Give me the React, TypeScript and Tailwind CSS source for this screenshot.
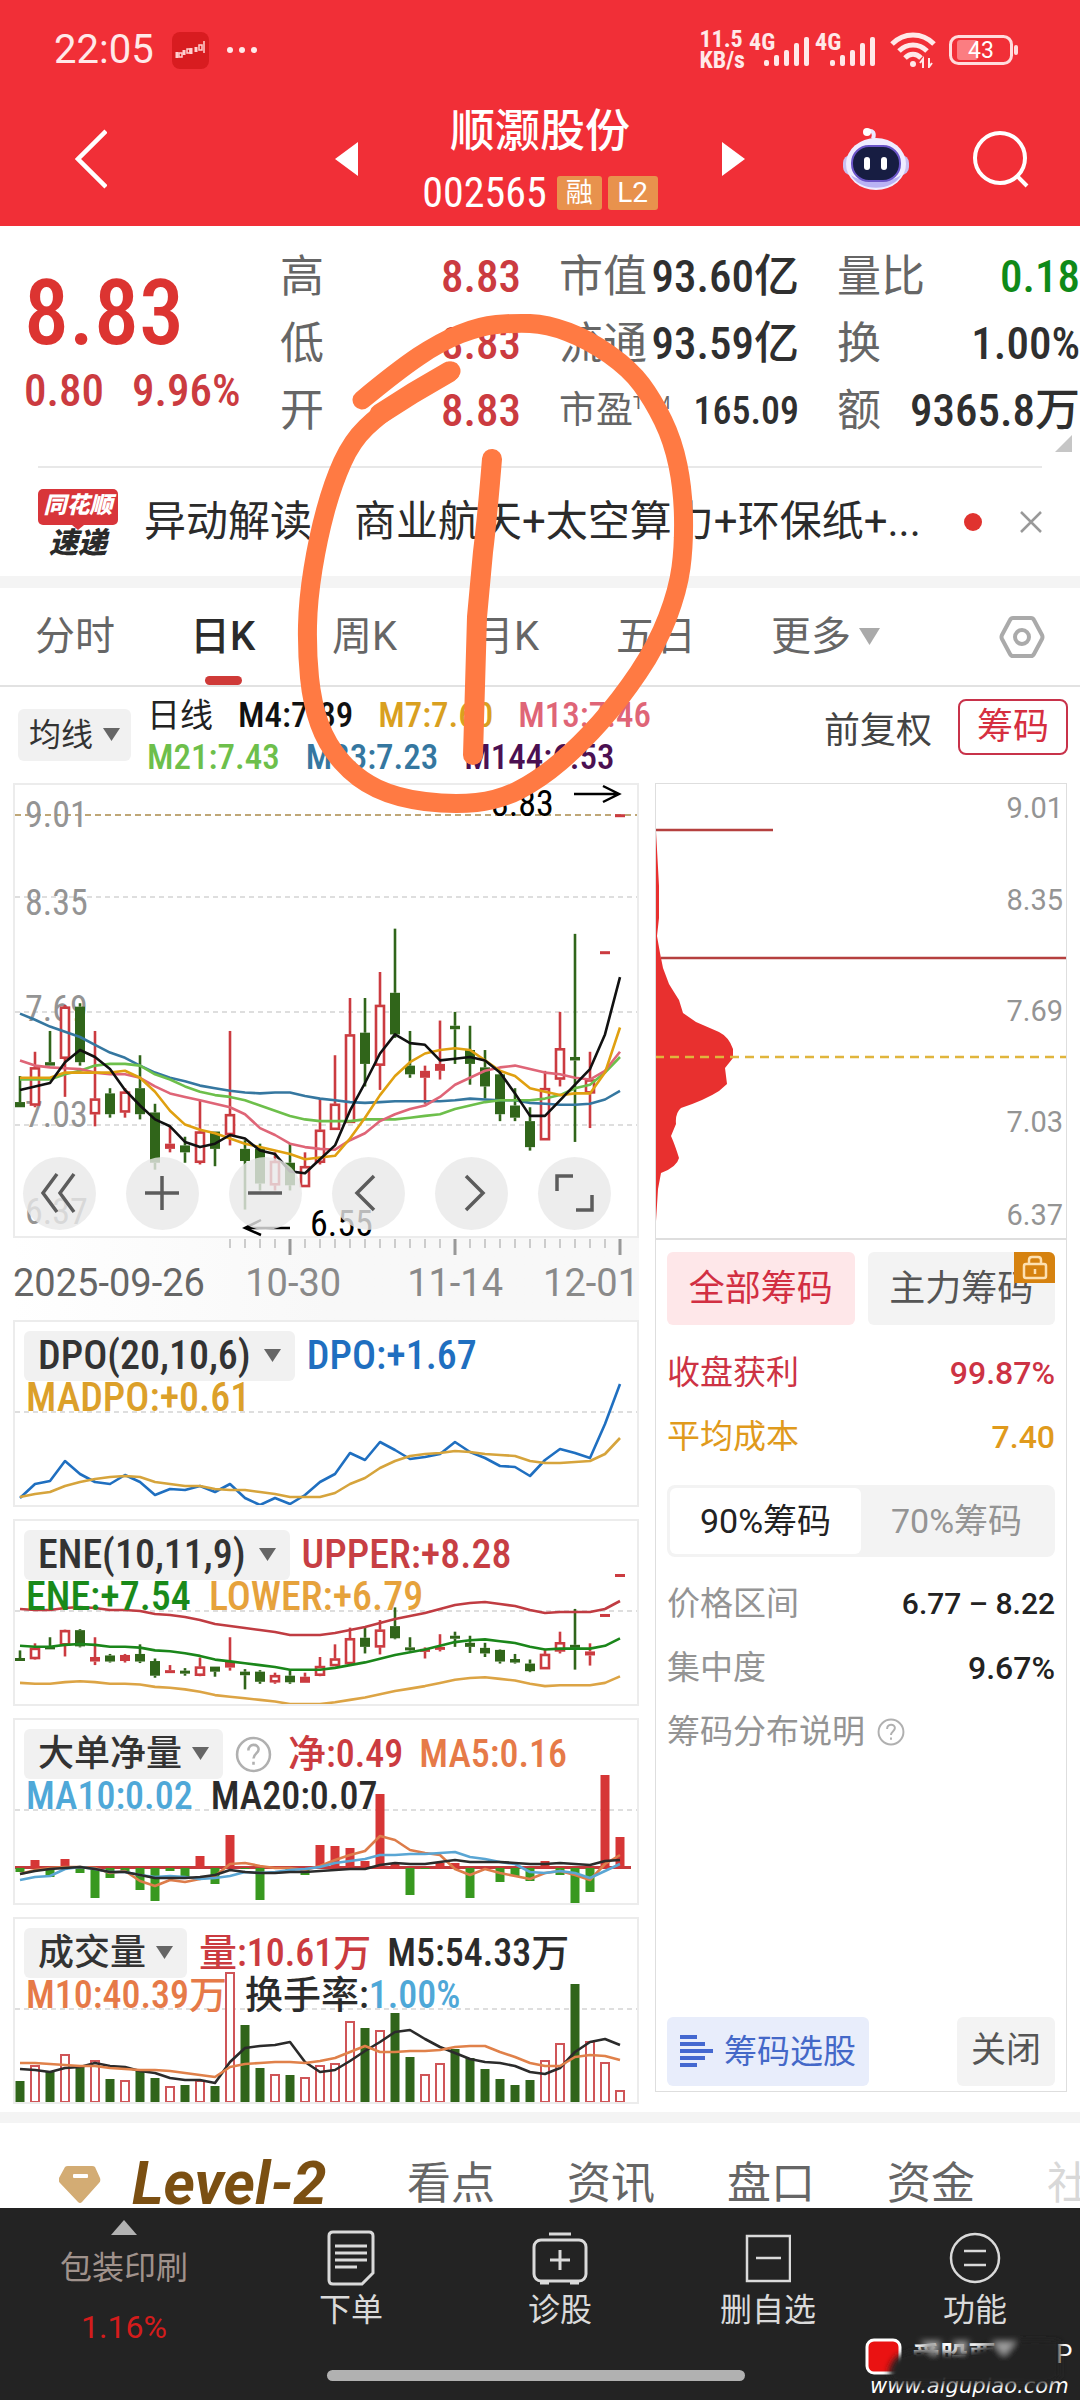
import React from "react";

const NUM = "font-['Roboto_Condensed','Noto_Sans_CJK_SC',sans-serif] font-medium";

const RED = "#cb3b40";
const GREEN = "#30651a";

// [high, body top, body bottom, low, up day]
const CANDLES: [number, number, number, number, boolean][] = [
  [7.32, 7.17, 7.14, 7.14, false],
  [7.46, 7.37, 7.15, 7.14, true],
  [7.58, 7.4, 7.38, 7.38, false],
  [7.73, 7.72, 7.42, 7.2, true],
  [7.74, 7.72, 7.4, 7.38, false],
  [7.58, 7.19, 7.1, 7.03, true],
  [7.25, 7.22, 7.1, 7.08, false],
  [7.25, 7.23, 7.11, 7.08, true],
  [7.44, 7.25, 7.1, 7.07, false],
  [7.16, 7.11, 6.82, 6.78, false],
  [7.03, 6.93, 6.9, 6.88, true],
  [6.97, 6.92, 6.88, 6.82, false],
  [7.18, 7.0, 6.82, 6.81, true],
  [7.0, 7.0, 6.9, 6.8, false],
  [7.58, 7.1, 6.98, 6.92, true],
  [6.95, 6.9, 6.83, 6.55, false],
  [6.93, 6.9, 6.7, 6.66, false],
  [6.88, 6.83, 6.69, 6.66, true],
  [6.93, 6.82, 6.69, 6.66, false],
  [6.88, 6.8, 6.68, 6.68, true],
  [7.19, 7.01, 6.82, 6.81, true],
  [7.44, 7.16, 7.01, 7.01, true],
  [7.77, 7.56, 7.05, 7.05, true],
  [7.77, 7.57, 7.39, 7.26, false],
  [7.92, 7.73, 7.38, 7.24, true],
  [8.17, 7.8, 7.56, 7.54, false],
  [7.58, 7.38, 7.33, 7.31, false],
  [7.38, 7.35, 7.31, 7.16, true],
  [7.64, 7.39, 7.35, 7.3, true],
  [7.69, 7.61, 7.59, 7.39, false],
  [7.61, 7.47, 7.39, 7.27, false],
  [7.47, 7.37, 7.26, 7.19, false],
  [7.34, 7.33, 7.1, 7.06, false],
  [7.25, 7.15, 7.08, 7.06, false],
  [7.14, 7.06, 6.91, 6.89, false],
  [7.35, 7.25, 6.95, 6.95, true],
  [7.69, 7.48, 7.3, 7.26, true],
  [8.14, 7.43, 7.41, 6.94, false],
  [7.46, 7.3, 7.22, 7.02, true],
  [8.04, 8.04, 8.04, 8.04, true],
  [8.83, 8.83, 8.83, 8.83, true],
];

const M4 = [7.24, 7.26, 7.28, 7.4, 7.47, 7.43, 7.36, 7.24, 7.15, 7.07, 7.03, 6.94, 6.91, 6.93, 6.98, 6.96, 6.89, 6.87, 6.77, 6.76, 6.84, 6.92, 7.12, 7.28, 7.45, 7.56, 7.51, 7.5, 7.41, 7.42, 7.43, 7.41, 7.34, 7.22, 7.09, 7.09, 7.18, 7.27, 7.36, 7.56, 7.89];
const M7 = [7.31, 7.31, 7.31, 7.34, 7.34, 7.34, 7.34, 7.35, 7.31, 7.23, 7.12, 7.04, 7.01, 6.99, 6.96, 6.93, 6.91, 6.89, 6.87, 6.84, 6.85, 6.86, 6.96, 7.08, 7.21, 7.32, 7.4, 7.45, 7.47, 7.48, 7.47, 7.41, 7.35, 7.32, 7.25, 7.23, 7.21, 7.22, 7.22, 7.34, 7.6];
const M13 = [7.41, 7.38, 7.37, 7.365, 7.36, 7.34, 7.33, 7.33, 7.31, 7.26, 7.22, 7.2, 7.18, 7.16, 7.14, 7.1, 7.02, 6.98, 6.93, 6.91, 6.9, 6.895, 6.95, 6.99, 7.06, 7.1, 7.13, 7.15, 7.2, 7.27, 7.31, 7.35, 7.37, 7.38, 7.36, 7.34, 7.33, 7.31, 7.3, 7.35, 7.46];
const M21 = [7.3, 7.3, 7.3, 7.33, 7.35, 7.38, 7.39, 7.39, 7.38, 7.33, 7.3, 7.26, 7.23, 7.21, 7.2, 7.18, 7.15, 7.12, 7.09, 7.07, 7.06, 7.06, 7.06, 7.07, 7.07, 7.07, 7.08, 7.09, 7.1, 7.13, 7.15, 7.17, 7.18, 7.18, 7.18, 7.19, 7.21, 7.25, 7.27, 7.34, 7.43];
const M33 = [7.68, 7.645, 7.605, 7.575, 7.545, 7.5, 7.455, 7.425, 7.38, 7.34, 7.31, 7.29, 7.265, 7.25, 7.235, 7.225, 7.22, 7.225, 7.225, 7.205, 7.19, 7.18, 7.17, 7.165, 7.17, 7.175, 7.175, 7.175, 7.175, 7.18, 7.19, 7.185, 7.18, 7.18, 7.165, 7.16, 7.155, 7.155, 7.16, 7.185, 7.235];

const DPO = [178, 164, 161, 141, 154, 162, 164, 155, 162, 175, 169, 170, 166, 172, 164, 178, 185, 178, 184, 175, 162, 154, 133, 140, 122, 130, 139, 137, 134, 122, 132, 138, 146, 147, 156, 140, 129, 133, 138, 104, 64];
const MADPO = [177, 174, 172, 166, 162, 159, 157, 156, 157, 162, 164, 166, 166, 169, 170, 170, 172, 174, 177, 177, 177, 173, 164, 158, 148, 141, 136, 134, 133, 131, 132, 134, 135, 136, 141, 143, 143, 142, 141, 134, 118];

const UPPER = [90, 91, 91, 89, 88, 89, 91, 91, 92, 95, 96, 98, 101, 105, 107, 109, 111, 113, 116, 116, 116, 114, 111, 108, 104, 100, 97, 94, 90, 86, 84, 83, 85, 87, 91, 94, 93, 93, 93, 90, 82];
const ENE = UPPER.map((v) => v * 0.92 + 44);
const LOWER = UPPER.map((v) => v * 0.81 + 91);

const NET_BARS = [154, 142, 159, 141, 155, 180, 160, 155, 172, 183, 153, 159, 138, 166, 117, 151, 182, 150, 155, 157, 127, 128, 130, 143, 76, 145, 177, 151, 145, 145, 180, 150, 164, 158, 163, 143, 157, 185, 174, 57, 119];
const NET5 = [156, 152, 150, 149, 149, 150, 155, 153, 163, 168, 162, 164, 161, 158, 146, 145, 148, 150, 150, 152, 148, 142, 137, 133, 118, 122, 132, 135, 137, 151, 157, 151, 155, 158, 161, 155, 153, 157, 162, 146, 137];
const NET10 = [162, 159, 158, 151, 149, 151, 154, 154, 157, 159, 158, 159, 161, 160, 158, 154, 155, 154, 152, 151, 149, 145, 143, 141, 137, 137, 136, 136, 135, 134, 139, 141, 144, 146, 154, 155, 153, 155, 160, 153, 146];
const NET20 = [156, 153, 151, 150, 149, 151, 154, 154, 157, 160, 160, 160, 159, 157, 152, 154, 155, 155, 154, 154, 153, 152, 151, 151, 147, 145, 146, 146, 144, 142, 144, 144, 144, 145, 146, 146, 145, 146, 147, 143, 142];

const VOL_BARS = [164, 149, 155, 138, 149, 144, 162, 164, 154, 161, 170, 168, 164, 169, 56, 108, 151, 158, 158, 161, 149, 147, 105, 111, 114, 96, 140, 158, 147, 132, 141, 152, 162, 168, 163, 144, 127, 67, 125, 146, 174];
const VOL5 = [152, 153, 155, 151, 150, 146, 149, 150, 154, 156, 161, 163, 163, 166, 145, 131, 129, 128, 125, 145, 155, 153, 144, 134, 125, 115, 113, 122, 130, 136, 142, 145, 146, 149, 155, 157, 151, 135, 125, 122, 128];
const VOL10 = [146, 146, 147, 148, 149, 149, 151, 152, 153, 153, 154, 156, 158, 160, 150, 147, 146, 145, 145, 146, 144, 141, 135, 129, 135, 135, 134, 134, 133, 130, 129, 129, 135, 140, 146, 149, 149, 140, 138, 139, 143];

const xAt = (i: number) => 7 + i * 15;
const priceY = (p: number) => (9.01 - p) * 173.4;
const eneY = (p: number) => 55 + (8.83 - p) * 50.6;
const same = (v: number) => v;

type LineProps = { data: number[]; color: string; scale?: (v: number) => number };

const Line = ({ data, color, scale = same }: LineProps) => (
  <polyline
    points={data.map((v, i) => `${xAt(i)},${scale(v).toFixed(1)}`).join(" ")}
    fill="none"
    stroke={color}
    strokeWidth="2.6"
    strokeLinejoin="round"
  />
);

const Candles = ({ scale }: { scale: (v: number) => number }) => (
  <>
    {CANDLES.map(([high, top, bottom, low, up], i) => {
      const color = up ? RED : GREEN;
      const x = xAt(i);
      const y1 = scale(top);
      const h = Math.max(scale(bottom) - y1, 3);
      const hollow = up && h > 7;
      return (
        <g key={i} stroke={color} strokeWidth="2.6">
          <line x1={x} x2={x} y1={scale(high)} y2={y1} />
          <line x1={x} x2={x} y1={y1 + h} y2={Math.max(scale(low), y1 + h)} />
          {hollow ? (
            <rect x={x - 4} y={y1 + 1} width="8" height={h - 2} fill="#fff" />
          ) : (
            <rect x={x - 5} y={y1} width="10" height={h} fill={color} stroke="none" />
          )}
        </g>
      );
    })}
  </>
);

const MidLine = ({ y }: { y: number }) => (
  <line x1="2" x2="624" y1={y} y2={y} stroke="#d4d4d4" strokeWidth="1.5" strokeDasharray="5 4" />
);

const Caret = ({ className = "" }: { className?: string }) => (
  <svg viewBox="0 0 17 14" className={`w-[17px] h-[14px] ${className}`}>
    <path d="M0 0h17L8.500 13z" fill="#666" />
  </svg>
);

const Help = ({ size }: { size: number }) => (
  <svg viewBox="0 0 36 36" width={size} height={size} fill="none" stroke="#b0b0b0" strokeWidth="2.5">
    <circle cx="18" cy="18" r="16" />
    <path d="M13 14c0-7 10-7 10-1 0 4-5 4-5 9M18 25v3" />
  </svg>
);

const Signal = () => (
  <svg viewBox="0 0 62 34" className="w-[62px] h-[34px] overflow-visible" fill="#ffe9e9">
    <text x="0" y="17" fontSize="24" fontWeight="700" fontFamily="Roboto Condensed">
      4G
    </text>
    <rect x="15" y="27" width="5" height="6" rx="2" />
    <rect x="25" y="22" width="5" height="11" rx="2" />
    <rect x="35" y="17" width="5" height="16" rx="2" />
    <rect x="45" y="10" width="5" height="23" rx="2" />
    <rect x="55" y="4" width="5" height="29" rx="2" />
  </svg>
);

const StatusBar = () => (
  <div className="flex items-center h-[100px] pl-[54px] pr-[61px] text-[#ffe9e9]">
    <span className="text-[40px] leading-none">22:05</span>
    <svg viewBox="0 0 37 37" className="ml-[18px] w-[37px] h-[37px]">
      <rect width="37" height="37" rx="8" fill="#d81c20" />
      <path
        d="M5 20v6M12 18v5M19 16v6M24 15v5"
        stroke="#ffd0d0"
        strokeWidth="3"
      />
      <path d="M7 21h3v4H7zM15 17h3v4h-3zM27 13h3v5h-3zM32 9v12" stroke="#ffd0d0" strokeWidth="1.500" fill="none" />
    </svg>
    <svg viewBox="0 0 32 8" className="ml-[17px] w-[32px] h-2" fill="#ffe9e9">
      <circle cx="4" cy="4" r="3" />
      <circle cx="16" cy="4" r="3" />
      <circle cx="28" cy="4" r="3" />
    </svg>
    <div className="ml-auto flex flex-col text-[24px] leading-[21px] font-bold font-['Roboto_Condensed',sans-serif]">
      <span>11.5</span>
      <span>KB/s</span>
    </div>
    <div className="ml-1 flex gap-1">
      <Signal />
      <Signal />
    </div>
    <svg viewBox="0 0 48 36" className="ml-3 w-[48px] h-[36px]" fill="none" stroke="#ffe9e9" strokeWidth="5">
      <path d="M3 12c12-12 30-12 42 0M10 19c8-8 20-8 28 0M16 26c5-5 11-5 16 0" />
      <circle cx="24" cy="32" r="3" fill="#ffe9e9" stroke="none" />
      <path d="M34 36v-9l-3 4M40 26v9l3-4" strokeWidth="2" />
    </svg>
    <svg viewBox="0 0 70 30" className="ml-3 w-[70px] h-[30px]">
      <rect x="8" y="5" width="21" height="20" rx="3" fill="#fb7d81" />
      <rect x="1.500" y="1.500" width="61" height="27" rx="8" fill="none" stroke="#ffdcdc" strokeWidth="3" />
      <rect x="65" y="10" width="4" height="10" rx="2" fill="#ffdcdc" />
      <text x="32" y="23" textAnchor="middle" fontSize="23" fill="#fff" fontFamily="Roboto">
        43
      </text>
    </svg>
  </div>
);

const TitleBar = () => (
  <div className="flex items-center h-[126px] pl-[75px] pr-[50px] text-white">
    <button aria-label="返回" className="mb-2">
      <svg viewBox="0 0 32 60" className="w-[32px] h-[60px]" fill="none" stroke="#fff" strokeWidth="4.500">
        <path d="M31 2 3 30l28 28" />
      </svg>
    </button>
    <button aria-label="上一只" className="ml-[228px] mb-2">
      <svg viewBox="0 0 23 34" className="w-[23px] h-[34px]">
        <path d="M23 0v34L0 17z" fill="#fff" />
      </svg>
    </button>
    <div className="flex-1 flex flex-col items-center">
      <h1 className="text-[45px] font-medium leading-[60px]">顺灏股份</h1>
      <div className="flex items-center gap-[6px] h-[62px]">
        <span className="text-[42px] leading-none mr-1 font-['Roboto_Condensed',sans-serif]">002565</span>
        <span className="w-[45px] h-[34px] rounded-[3px] bg-[#e8924d] text-[27px] leading-[34px] text-center">
          融
        </span>
        <span className="w-[50px] h-[34px] rounded-[3px] bg-[#e8924d] text-[28px] leading-[34px] text-center">
          L2
        </span>
      </div>
    </div>
    <button aria-label="下一只" className="mb-2">
      <svg viewBox="0 0 23 34" className="w-[23px] h-[34px]">
        <path d="M0 0v34l23-17z" fill="#fff" />
      </svg>
    </button>
    <button aria-label="智能助手" className="ml-[98px] mb-2">
      <svg viewBox="0 0 66 64" className="w-[66px] h-[64px]">
        <path d="M30 12c2-6 0-9-5-8" fill="none" stroke="#ece8ff" strokeWidth="4" />
        <circle cx="24" cy="5" r="4" fill="#fff" />
        <rect x="0" y="28" width="66" height="20" rx="8" fill="#c9bff0" />
        <ellipse cx="33" cy="37" rx="30" ry="26" fill="#efecff" />
        <path d="M8 48c8 17 42 17 50 0-10 8-40 8-50 0z" fill="#b9b2f4" />
        <rect x="9" y="19" width="48" height="35" rx="17" fill="#171d42" stroke="#6b55c8" strokeWidth="2" />
        <rect x="21" y="30" width="6" height="13" rx="3" fill="#fff" />
        <rect x="38" y="30" width="6" height="13" rx="3" fill="#fff" />
      </svg>
    </button>
    <button aria-label="搜索" className="ml-[63px] mb-2">
      <svg viewBox="0 0 58 58" className="w-[58px] h-[58px]" fill="none" stroke="#fff" strokeWidth="4">
        <circle cx="28" cy="28" r="25" />
        <path d="m45 46 10 10" />
      </svg>
    </button>
  </div>
);

type QuoteRow = { label: string; sub?: string; value: string; color: string; small?: boolean };

const QUOTES: QuoteRow[][] = [
  [
    { label: "高", value: "8.83", color: "text-[#cb3b40]" },
    { label: "低", value: "8.83", color: "text-[#cb3b40]" },
    { label: "开", value: "8.83", color: "text-[#cb3b40]" },
  ],
  [
    { label: "市值", value: "93.60亿", color: "text-[#2f2f2f]" },
    { label: "流通", value: "93.59亿", color: "text-[#2f2f2f]" },
    { label: "市盈", sub: "TTM", value: "165.09", color: "text-[#2f2f2f]", small: true },
  ],
  [
    { label: "量比", value: "0.18", color: "text-[#0f8a18]" },
    { label: "换", value: "1.00%", color: "text-[#2f2f2f]" },
    { label: "额", value: "9365.8万", color: "text-[#2f2f2f]" },
  ],
];

const Quote = () => (
  <section className="relative grid grid-cols-[218fr_241fr_240fr_243fr] gap-x-[38px] pl-6 pt-[17px] h-[240px]">
    <div className={`text-[#dc3431] ${NUM}`}>
      <div className="mt-[26px] text-[90px] leading-[90px]">8.83</div>
      <div className="flex gap-[28px] text-[45px] leading-[64px] text-[#cb3b40] whitespace-nowrap">
        <span>0.80</span>
        <span>9.96%</span>
      </div>
    </div>
    {QUOTES.map((rows, i) => (
      <dl key={i}>
        {rows.map((row) => (
          <div key={row.label} className="flex items-center justify-between h-[67px] whitespace-nowrap">
            <dt className={`text-[#666] leading-none ${row.small ? "text-[37px]" : "text-[44px]"}`}>
              {row.label}
              {row.sub && <sup className="text-[18px] top-[-14px]">{row.sub}</sup>}
            </dt>
            <dd className={`leading-none ${NUM} ${row.color} ${row.small ? "text-[38px]" : "text-[45px]"}`}>
              {row.value}
            </dd>
          </div>
        ))}
      </dl>
    ))}
    <svg viewBox="0 0 17 17" className="absolute right-2 bottom-[14px] w-[17px] h-[17px]">
      <path d="M17 0v17H0z" fill="#c6c6c6" />
    </svg>
  </section>
);

const Banner = () => (
  <section className="mx-[38px] flex items-center h-[110px] border-t-2 border-[#e8e8e8]">
    <div className="w-[80px] flex flex-col items-center font-black italic">
      <span className="w-[80px] h-[36px] rounded-[5px] bg-[#d8353a] text-white text-[23px] leading-[34px] text-center">
        同花顺
      </span>
      <svg viewBox="0 0 12 5" className="w-3 h-[5px]">
        <path d="M0 0h12L6 5z" fill="#d8353a" />
      </svg>
      <span className="text-[29px] leading-[26px] text-[#2a2a2a]">速递</span>
    </div>
    <a href="#news" className="ml-[26px] flex-1 flex gap-[42px] text-[42px] text-[#2b2b2b] whitespace-nowrap leading-[60px]">
      <span>异动解读</span>
      <span>商业航天+太空算力+环保纸+...</span>
    </a>
    <span className="w-[18px] h-[18px] rounded-full bg-[#e0332f]" />
    <button aria-label="关闭提示" className="ml-[38px]">
      <svg viewBox="0 0 22 22" className="w-[22px] h-[22px]" stroke="#999" strokeWidth="2.500">
        <path d="m1 1 20 20M21 1 1 21" />
      </svg>
    </button>
  </section>
);

const PERIODS = ["分时", "日K", "周K", "月K", "五日"];

const PeriodTabs = () => (
  <nav className="flex items-center h-[99px] pl-[35px] pr-[35px] border-b-2 border-[#e2e2e2] text-[40px] text-[#666]">
    {PERIODS.map((name) => (
      <button
        key={name}
        className={`relative h-full mr-[71px] text-left whitespace-nowrap ${
          name.endsWith("K") ? "w-[71px]" : "w-[84px]"
        } ${name === "日K" ? "font-medium text-[#2b2b2b]" : ""}`}
      >
        {name}
        {name === "日K" && (
          <span className="absolute left-[15px] bottom-0 w-[37px] h-[9px] rounded-full bg-[#cf3a38]" />
        )}
      </button>
    ))}
    <button className="flex items-center gap-2 whitespace-nowrap">
      更多
      <svg viewBox="0 0 21 18" className="w-[21px] h-[18px]">
        <path d="M0 0h21L10.500 17z" fill="#aaa" />
      </svg>
    </button>
    <button aria-label="设置" className="ml-auto">
      <svg viewBox="0 0 46 44" className="w-[46px] h-[44px]" fill="none" stroke="#aaa" strokeWidth="4">
        <path d="M14 3h18q2 0 3 2l8 15q1 2 0 4l-8 15q-1 2-3 2H14q-2 0-3-2L3 24q-1-2 0-4l8-15q1-2 3-2z" />
        <circle cx="23" cy="22" r="7" />
      </svg>
    </button>
  </nav>
);

const AverageLegend = () => (
  <div className="flex items-center h-[96px] pl-[18px] pr-[12px]">
    <button className="flex items-center gap-[10px] w-[113px] h-[52px] pl-[11px] rounded-md bg-[#f1f1f1] text-[32px] text-[#333] whitespace-nowrap">
      均线
      <Caret />
    </button>
    <div className={`ml-[16px] mt-1 text-[35px] leading-[42px] whitespace-nowrap ${NUM}`}>
      <div className="flex gap-[25px]">
        <span className="text-[33px] font-normal text-[#222]">日线</span>
        <span className="text-[#111]">M4:7.89</span>
        <span className="text-[#d9a01f]">M7:7.60</span>
        <span className="text-[#df6577]">M13:7.46</span>
      </div>
      <div className="flex gap-[26px]">
        <span className="text-[#6dbf4b]">M21:7.43</span>
        <span className="text-[#3577a0]">M33:7.23</span>
        <span className="text-[#4b1052]">M144:6.53</span>
      </div>
    </div>
    <button className="ml-auto mb-2 text-[36px] text-[#444] whitespace-nowrap">前复权</button>
    <button className="ml-[26px] mb-4 w-[110px] h-[56px] rounded-lg border-2 border-[#c8324a] text-[36px] leading-[50px] text-[#d62f40] whitespace-nowrap">
      筹码
    </button>
  </div>
);

const CHART_ACTIONS = [
  { label: "最前", d: "M34 17 20 36l14 19M51 17 37 36l14 19" },
  { label: "放大", d: "M36 19v34M19 36h34" },
  { label: "缩小", d: "M19 36h34" },
  { label: "左移", d: "M42 19 25 36l17 17" },
  { label: "右移", d: "M31 19l17 17-17 17" },
  { label: "全屏", d: "M19 34V19h16M54 38v15H38" },
];

const PRICE_LABELS: [string, number][] = [
  ["9.01", 44],
  ["8.35", 132],
  ["7.69", 238],
  ["7.03", 344],
  ["6.37", 441],
];

const PriceChart = () => (
  <div className="relative border-2 border-[#ececec]">
    <svg viewBox="2 2 622 451" className="block w-full h-auto overflow-visible">
      {[114, 229, 342].map((y) => (
        <MidLine key={y} y={y} />
      ))}
      <line x1="2" x2="624" y1="32" y2="32" stroke="#bfa777" strokeWidth="2" strokeDasharray="6 4" />
      <g fontFamily="Roboto Condensed" fontSize="36" fill="#949494">
        {PRICE_LABELS.map(([text, y]) => (
          <text key={text} x="12" y={y}>
            {text}
          </text>
        ))}
      </g>
      <Candles scale={priceY} />
      <Line data={M33} color="#3577a0" scale={priceY} />
      <Line data={M21} color="#6dbf4b" scale={priceY} />
      <Line data={M13} color="#df6577" scale={priceY} />
      <Line data={M7} color="#e0a010" scale={priceY} />
      <Line data={M4} color="#111" scale={priceY} />
      <g fontFamily="Roboto Condensed" fontSize="36" fill="#000">
        <text x="478" y="33">
          8.83
        </text>
        <text x="297" y="453">
          6.55
        </text>
      </g>
      <path
        d="M561 11h45M590 3l16 8-16 8M277 445h-45M248 437l-16 8 16 7"
        fill="none"
        stroke="#000"
        strokeWidth="2.500"
      />
    </svg>
    <div className="absolute inset-x-0 bottom-[6px] flex justify-between pl-2 pr-[26px]">
      {CHART_ACTIONS.map((action) => (
        <button key={action.label} aria-label={action.label} className="w-[73px] h-[73px] rounded-full bg-[#e8e8e8]/80">
          <svg viewBox="0 0 73 73" className="w-full h-full" fill="none" stroke="#5c5c5c" strokeWidth="3.500">
            <path d={action.d} />
          </svg>
        </button>
      ))}
    </div>
  </div>
);

const DateAxis = () => (
  <div className="h-[82px] bg-gradient-to-r from-white via-[#f8f8f8] to-[#f8f8f8]">
    <svg viewBox="0 0 626 18" className="block w-full h-auto">
      {Array.from({ length: 27 }, (_, i) => 14 + i).map((i) => {
        const major = i === 18 || i === 29 || i === 40;
        return (
          <line
            key={i}
            x1={xAt(i)}
            x2={xAt(i)}
            y1="1"
            y2={major ? 17 : 10}
            stroke={major ? "#999" : "#ccc"}
            strokeWidth={major ? 3 : 2}
          />
        );
      })}
    </svg>
    <div className="flex text-[38px] leading-[54px] text-[#8a8a8a] whitespace-nowrap">
      <span className="text-[#666]">2025-09-26</span>
      <span className="ml-auto">10-30</span>
      <span className="ml-[66px]">11-14</span>
      <span className="ml-[40px]">12-01</span>
    </div>
  </div>
);

type IndicatorProps = {
  name: string;
  cjk?: boolean;
  help?: boolean;
  first: React.ReactNode;
  second: React.ReactNode;
  children: React.ReactNode;
};

const Indicator = ({ name, cjk, help, first, second, children }: IndicatorProps) => (
  <section className="relative border-2 border-[#ececec]">
    <svg viewBox="2 2 622 183" className="block w-full h-auto">
      <MidLine y={92} />
      {children}
    </svg>
    <div className={`absolute left-[9px] top-[9px] leading-[40px] whitespace-nowrap ${NUM} ${cjk ? "text-[38px]" : "text-[40px]"}`}>
      <div className="flex items-center gap-[12px] h-[50px]">
        <button
          className={`flex items-center h-[50px] px-[14px] rounded-md bg-[#f1f1f1] text-[#333] ${
            cjk ? "gap-[10px] text-[36px]" : "gap-[13px]"
          }`}
        >
          {name}
          <Caret />
        </button>
        {help && <Help size={37} />}
        {first}
      </div>
      <div className="flex items-center gap-[18px] pl-[2px] h-[34px]">{second}</div>
    </div>
  </section>
);

const NetBars = () => (
  <>
    <rect x="2" y="148" width="616" height="3" fill="#c33a3c" />
    {NET_BARS.map((v, i) => {
      const up = v < 150;
      return (
        <rect
          key={i}
          x={xAt(i) - 4.5}
          y={up ? v : 150}
          width="9"
          height={Math.abs(v - 150)}
          fill={up ? "#d63636" : "#38981f"}
        />
      );
    })}
  </>
);

const VolumeBars = () => (
  <>
    {VOL_BARS.map((v, i) =>
      CANDLES[i][4] ? (
        <rect
          key={i}
          x={xAt(i) - 4}
          y={v}
          width="8"
          height={185 - v}
          fill="#fff"
          stroke="#cf5558"
          strokeWidth="2"
        />
      ) : (
        <rect key={i} x={xAt(i) - 4.5} y={v} width="9" height={186 - v} fill={GREEN} />
      )
    )}
  </>
);

const CHIP_LABELS: [string, number][] = [
  ["9.01", 35],
  ["8.35", 127],
  ["7.69", 238],
  ["7.03", 349],
  ["6.37", 442],
];

const ChipChart = () => (
  <svg viewBox="1 1 410 454" className="block w-full h-auto border-b-2 border-[#dedede]">
    <path
      d="M0 17 1 48 4 103V135L2 153 5 170 8 185 14 201Q22 214 24 217L28 230 41 239 64 249Q74 254 78 266V275L70 285 72 301 64 308Q50 317 26 325 20 330 21 341L16 353Q20 362 24 375 22 384 6 390L3 406 1 438H0z"
      fill="#e8302f"
    />
    <path d="M0 47h118M6 175h405" stroke="#b5403f" strokeWidth="2.500" />
    <path d="M0 274h411" stroke="#e0b53c" strokeWidth="2.500" strokeDasharray="9 6" />
    <g fontFamily="Roboto" fontSize="29" fill="#949494" textAnchor="end">
      {CHIP_LABELS.map(([text, y]) => (
        <text key={text} x="408" y={y}>
          {text}
        </text>
      ))}
    </g>
  </svg>
);

const ChipPanel = () => (
  <section className="mb-3 flex flex-col border border-[#dedede]">
    <ChipChart />
    <div className="flex-1 flex flex-col px-[11px] pt-3 pb-[5px] whitespace-nowrap">
      <div className="grid grid-cols-2 gap-[13px] text-[36px] leading-[72px]">
        <button className="h-[73px] rounded-md bg-[#fee7e9] text-[#d22f42]">全部筹码</button>
        <button className="relative h-[73px] rounded-md bg-[#f3f3f3] text-[#555]">
          主力筹码
          <span className="absolute right-0 top-0 flex justify-center w-[41px] h-[31px] rounded-tr-md bg-[#d6820f]">
            <svg viewBox="0 0 26 26" className="mt-[2px] w-[26px] h-[26px]" fill="none" stroke="#fde0b0" strokeWidth="2.500">
              <rect x="2" y="10" width="22" height="14" rx="2" />
              <path d="M7 10V6q0-3 3-3h6q3 0 3 3v4M13 15v5" />
            </svg>
          </span>
        </button>
      </div>
      <dl className="mt-4 text-[33px] leading-[64px]">
        <div className="flex justify-between text-[#cd3344]">
          <dt>收盘获利</dt>
          <dd className="font-medium text-[32px]">99.87%</dd>
        </div>
        <div className="flex justify-between text-[#e09a1c]">
          <dt>平均成本</dt>
          <dd className="font-medium text-[32px]">7.40</dd>
        </div>
      </dl>
      <div className="mt-4 grid grid-cols-2 p-[3px] rounded-lg bg-[#f3f3f3] text-[34px] leading-[66px]">
        <button className="rounded-md bg-white text-[#222]">90%筹码</button>
        <button className="text-[#949494]">70%筹码</button>
      </div>
      <dl className="mt-[15px] text-[33px] leading-[64px] text-[#949494]">
        <div className="flex justify-between">
          <dt>价格区间</dt>
          <dd className="font-medium text-[30px] text-[#222]">6.77 – 8.22</dd>
        </div>
        <div className="flex justify-between">
          <dt>集中度</dt>
          <dd className="font-medium text-[32px] text-[#222]">9.67%</dd>
        </div>
      </dl>
      <button className="flex items-center gap-3 text-[33px] leading-[64px] text-[#949494]">
        筹码分布说明
        <Help size={28} />
      </button>
      <div className="mt-auto flex justify-between">
        <button className="flex items-center gap-[11px] h-[69px] px-[13px] rounded-md bg-[#e8edfb] text-[33px] text-[#4468c8]">
          <svg viewBox="0 0 33 33" className="w-[33px] h-[33px]" fill="#4468d0">
            <path d="M0 0h17v4H0zM0 7h25v4H0zM0 14h33v4H0zM0 21h25v4H0zM0 28h17v4H0z" />
          </svg>
          筹码选股
        </button>
        <button className="w-[98px] h-[69px] rounded-md bg-[#f3f3f3] text-[35px] text-[#555]">关闭</button>
      </div>
    </div>
  </section>
);

const LevelTabs = () => (
  <nav className="flex items-start h-[85px] pl-[59px] pt-[36px] overflow-hidden whitespace-nowrap text-[44px] leading-[50px] text-[#666]">
    <svg viewBox="0 0 42 38" className="shrink-0 mt-[7px] w-[42px] h-[38px]">
      <path d="M9 0h24q2 0 3 1l5 11q1 3-1 5L23 36q-2 2-4 0L1 17q-2-2-1-5L6 1q1-1 3-1z" fill="#d3ac74" />
      <rect x="14" y="8" width="15" height="4" rx="1" fill="#fff" />
    </svg>
    <button className="shrink-0 ml-[31px] w-[203px] text-left text-[60px] font-bold italic text-[#7b4f12]">Level-2</button>
    <button className="shrink-0 ml-[72px]">看点</button>
    <button className="shrink-0 ml-[72px]">资讯</button>
    <button className="shrink-0 ml-[72px]">盘口</button>
    <button className="shrink-0 ml-[72px]">资金</button>
    <button className="shrink-0 ml-[72px] text-[#d8d8d8]">社区</button>
  </nav>
);

const BottomBar = () => (
  <footer className="relative h-[193px] bg-[#232323] text-[#dadada]">
    <div className="grid grid-cols-[248fr_206fr_212fr_204fr_210fr] text-[32px] leading-[40px]">
      <button className="flex flex-col items-center pt-3 text-[#a0928c]">
        <svg viewBox="0 0 26 15" className="w-[26px] h-[15px]">
          <path d="M0 15h26L13 0z" fill="#b2b2b2" />
        </svg>
        <span className="mt-[13px]">包装印刷</span>
        <span className="mt-[19px] text-[#d41c1c]">1.16%</span>
      </button>
      <button className="flex flex-col items-center pt-[22px]">
        <svg viewBox="0 0 48 56" className="w-[48px] h-[56px]" fill="none" stroke="#dadada" strokeWidth="3">
          <path d="M6 2h36q4 0 4 4v37L35 54H6q-4 0-4-4V6q0-4 4-4z" />
          <path d="M8 16h32M8 23h32M8 30h32M8 37h22" />
        </svg>
        <span className="mt-1">下单</span>
      </button>
      <button className="flex flex-col items-center pt-[22px]">
        <svg viewBox="0 0 56 56" className="w-[56px] h-[56px]" fill="none" stroke="#dadada" strokeWidth="3">
          <rect x="2" y="10" width="52" height="41" rx="7" />
          <path d="M17 4h22M28 20v20M18 30h20M8 53h9M38 53h9" />
        </svg>
        <span className="mt-1">诊股</span>
      </button>
      <button className="flex flex-col items-center pt-[22px]">
        <svg viewBox="0 0 46 56" className="w-[46px] h-[56px]" fill="none" stroke="#dadada" strokeWidth="2.500">
          <rect x="2" y="6" width="43" height="45" />
          <path d="M11 28h25" />
        </svg>
        <span className="mt-1">删自选</span>
      </button>
      <button className="flex flex-col items-center pt-[22px]">
        <svg viewBox="0 0 52 56" className="w-[52px] h-[56px]" fill="none" stroke="#dadada" strokeWidth="2.500">
          <circle cx="26" cy="28" r="24" />
          <path d="M15 21h22M15 35h22" />
        </svg>
        <span className="mt-1">功能</span>
      </button>
    </div>
    <div className="absolute left-[327px] bottom-[20px] w-[418px] h-[11px] rounded-full bg-[#b1b1b1]" />
    {/* smudged site mark in the corner */}
    <svg viewBox="0 0 218 72" className="absolute right-0 bottom-0 w-[218px] h-[72px]">
      <defs>
        <filter id="smudge">
          <feGaussianBlur stdDeviation="3" />
        </filter>
      </defs>
      <rect x="5" y="11" width="33" height="33" rx="7" fill="#ea1212" stroke="#fff" strokeWidth="3" />
      <g fill="#fff">
        <text x="50" y="38" fontSize="28" fontWeight="700" fontFamily="Noto Sans CJK SC">
          爱股票
        </text>
        <text x="194" y="34" fontSize="26" fontFamily="Roboto">
          P
        </text>
        <text x="8" y="64" fontSize="21" fontStyle="italic" fontWeight="500" fontFamily="DejaVu Sans">
          www.aigupiao.com
        </text>
      </g>
      <g filter="url(#smudge)" fill="#202020">
        <path d="M34 28q20-10 40-6 20 6 46-4 30-10 78-6v36q-10 10-34 7-60-2-130 0-14-10 0-27z" />
        <path d="M58 12h22l-8 15zM90 12h18l-8 14zM130 12h24l-12 15z" fill="#9f9f9f" />
      </g>
    </svg>
  </footer>
);

const LOOP: [number, number][] = [
  [362, 400], [397, 371], [440, 342], [480, 326], [513, 323], [547, 324], [589, 340], [630, 369],
  [653, 400], [673, 441], [683, 490], [684, 545], [678, 590], [657, 645], [620, 700], [580, 745],
  [540, 779], [500, 800], [453, 805], [397, 798], [357, 779], [327, 745], [312, 703], [307, 652],
  [308, 600], [318, 538], [333, 483], [352, 441], [380, 414], [413, 393], [451, 371],
];

// quadratic curve through the midpoints, so the stroke stays round
const smooth = (points: [number, number][]) => {
  const [first, ...rest] = points;
  const last = rest[rest.length - 1];
  const curves = rest
    .slice(0, -1)
    .map(([x, y], i) => `Q${x} ${y} ${(x + rest[i + 1][0]) / 2} ${(y + rest[i + 1][1]) / 2}`);
  return `M${first.join(" ")}${curves.join("")}L${last.join(" ")}`;
};

// hand-drawn circle and stroke lying over the quote and the tabs
const Doodle = () => (
  <svg
    viewBox="0 0 1080 840"
    className="absolute left-0 top-0 w-full h-auto pointer-events-none"
    fill="none"
    stroke="#ff7a43"
    strokeLinecap="round"
    strokeLinejoin="round"
  >
    <path d={smooth(LOOP)} strokeWidth="19" />
    <path d="M380 414 413 393 449 372" strokeWidth="21" />
    <path d="M492 459Q487 520 483 552L477 617 473 755" strokeWidth="20" />
  </svg>
);

const App = () => {
  return (
    <main className="relative bg-white overflow-hidden font-['Roboto','Noto_Sans_CJK_SC',sans-serif]">
      <header className="bg-[#f12f37]">
        <StatusBar />
        <TitleBar />
      </header>
      <Quote />
      <Banner />
      <div className="h-3 bg-[#f4f4f4]" />
      <PeriodTabs />
      <AverageLegend />
      <div className="grid grid-cols-[626fr_412fr] gap-4 px-[13px]">
        <div>
          <PriceChart />
          <DateAxis />
          <div className="flex flex-col gap-3">
            <Indicator
              name="DPO(20,10,6)"
              first={<span className="text-[#1f6fc0]">DPO:+1.67</span>}
              second={<span className="text-[#dca02a]">MADPO:+0.61</span>}
            >
              <Line data={DPO} color="#1f6fc0" />
              <Line data={MADPO} color="#d6a43c" />
            </Indicator>
            <Indicator
              name="ENE(10,11,9)"
              first={<span className="text-[#c73f44]">UPPER:+8.28</span>}
              second={
                <>
                  <span className="text-[#1a8a1a]">ENE:+7.54</span>
                  <span className="text-[#e6a23c]">LOWER:+6.79</span>
                </>
              }
            >
              <Candles scale={eneY} />
              <Line data={UPPER} color="#c03c42" />
              <Line data={ENE} color="#1a861a" />
              <Line data={LOWER} color="#dca445" />
            </Indicator>
            <Indicator
              name="大单净量"
              cjk
              help
              first={
                <>
                  <span className="ml-1 text-[#cb3b40]">净:0.49</span>
                  <span className="ml-1 text-[#e67a48]">MA5:0.16</span>
                </>
              }
              second={
                <>
                  <span className="text-[#4fa8d8]">MA10:0.02</span>
                  <span className="text-[#2b2b2b]">MA20:0.07</span>
                </>
              }
            >
              <NetBars />
              <Line data={NET5} color="#dd7c4a" />
              <Line data={NET10} color="#5aa6d4" />
              <Line data={NET20} color="#2b2b2b" />
            </Indicator>
            <Indicator
              name="成交量"
              cjk
              first={
                <>
                  <span className="text-[#cb3b40]">量:10.61万</span>
                  <span className="ml-1 text-[#2b2b2b]">M5:54.33万</span>
                </>
              }
              second={
                <>
                  <span className="text-[#e67a48]">M10:40.39万</span>
                  <span className="text-[#2b2b2b]">
                    换手率:<span className="text-[#4fa8d8]">1.00%</span>
                  </span>
                </>
              }
            >
              <VolumeBars />
              <Line data={VOL5} color="#2b2b2b" />
              <Line data={VOL10} color="#e0814a" />
            </Indicator>
          </div>
        </div>
        <ChipPanel />
      </div>
      <div className="mt-2 h-[11px] bg-[#f4f4f4]" />
      <LevelTabs />
      <BottomBar />
      <Doodle />
    </main>
  );
};

export default App;
